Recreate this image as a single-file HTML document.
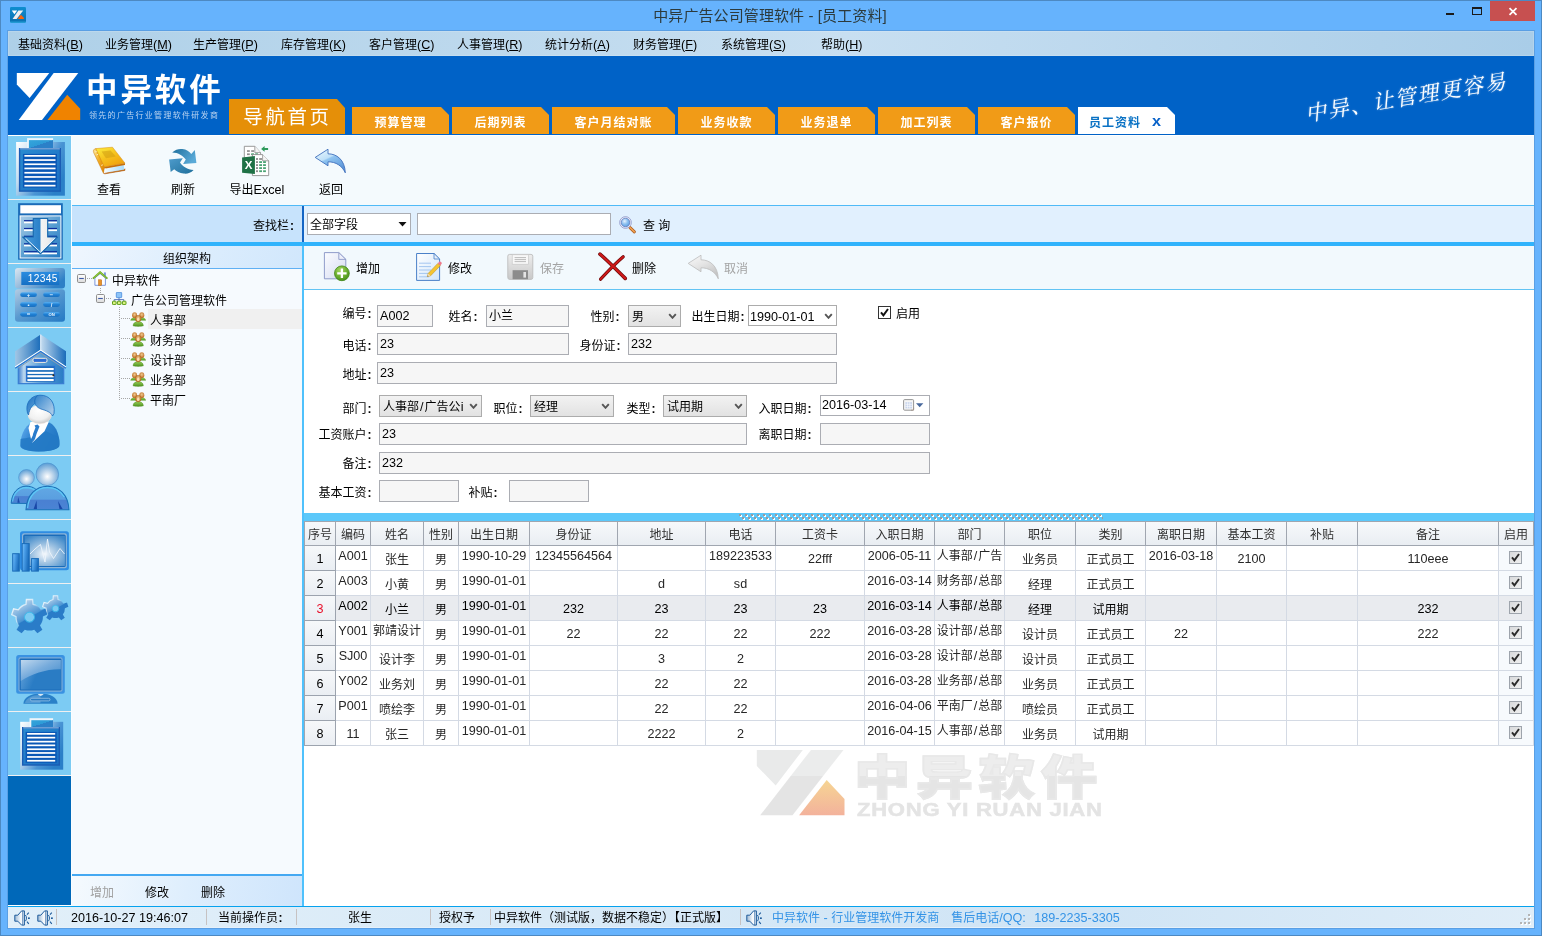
<!DOCTYPE html>
<html lang="zh-CN"><head><meta charset="utf-8"><title>中异广告公司管理软件 - [员工资料]</title>
<style>
html,body{margin:0;padding:0}
body{width:1542px;height:936px;overflow:hidden;position:relative;background:#66b3fd;font:12px/1 "Liberation Sans","Noto Sans CJK SC",sans-serif;color:#000;-webkit-font-smoothing:antialiased}
div,span,svg{box-sizing:border-box}
#win{position:absolute;left:0;top:0;width:1542px;height:936px;overflow:hidden;will-change:transform}
.a{position:absolute}
.t{position:absolute;white-space:nowrap;line-height:18px;height:16px}
.n{font-size:12.6px}
.sl{display:inline-block;width:5.6px;text-align:center;font-size:12.6px}
u{text-decoration:underline;text-underline-offset:1px}
.tab{position:absolute;top:107px;height:27px;width:97px;background:#f19b17;color:#fff;font-weight:bold;font-size:12px;line-height:32px;letter-spacing:1px;text-align:center;clip-path:polygon(0 0,calc(100% - 8px) 0,100% 8px,100% 100%,0 100%)}
.inp{position:absolute;height:22px;border:1px solid #abadb3;background:#f6f6f6;line-height:21px;padding-left:2px;white-space:nowrap;overflow:hidden}
.sel{position:absolute;height:22px;border:1px solid #acacac;background:linear-gradient(#f2f2f2,#e2e2e2);line-height:22px;padding-left:3px;white-space:nowrap;overflow:hidden}
.lab{position:absolute;white-space:nowrap;line-height:18px;height:16px;text-align:right}
.co{display:inline-block;width:6px;text-align:center;font-weight:bold}
.sep{position:absolute;top:909px;width:1px;height:16px;background:#c6c2c2}
.hd{position:absolute;top:522px;height:24px;border-right:1px solid #a0a6b0;border-bottom:1px solid #a0a6b0;background:linear-gradient(#f7f9fb,#e9edf2);text-align:center;line-height:27px;white-space:nowrap;overflow:hidden;color:#303030}
.c{position:absolute;height:25px;border-right:1px solid #d4dae4;border-bottom:1px solid #d4dae4;white-space:nowrap;overflow:hidden;color:#262626}
.cc{text-align:center;line-height:28px}
.cl{line-height:26px}
.ct{text-align:center;line-height:16px;padding-top:2px}
.rn{position:absolute;left:305px;width:31px;height:25px;border-right:1px solid #9ca3ae;border-bottom:1px solid #9ca3ae;background:linear-gradient(#f6f8fa,#eaeef3);text-align:center;line-height:26px;color:#000}
.ti{position:absolute;height:20px;line-height:22px;white-space:nowrap}
</style></head>
<body>
<div id="win">
<svg width="0" height="0" style="position:absolute"><defs>
<linearGradient id="bkTop" x1="0.2" y1="0" x2="0.9" y2="1"><stop offset="0" stop-color="#fbe638"/><stop offset="0.45" stop-color="#f6c01c"/><stop offset="1" stop-color="#ee9a0c"/></linearGradient>
<linearGradient id="bkSp" x1="0" y1="0" x2="1" y2="0.4"><stop offset="0" stop-color="#fce9a0"/><stop offset="0.5" stop-color="#f4b428"/><stop offset="1" stop-color="#e28a0a"/></linearGradient>
<linearGradient id="bkPg" x1="0" y1="0" x2="1" y2="0"><stop offset="0" stop-color="#f4fbff"/><stop offset="1" stop-color="#a8dcfc"/></linearGradient>
<linearGradient id="rfA" x1="0" y1="0" x2="1" y2="0.5"><stop offset="0" stop-color="#1f6f9c"/><stop offset="1" stop-color="#5aaad8"/></linearGradient>
<linearGradient id="rfB" x1="0" y1="0" x2="1" y2="1"><stop offset="0" stop-color="#4e9ccc"/><stop offset="1" stop-color="#1f6f9c"/></linearGradient>
<linearGradient id="bkA" x1="0" y1="0" x2="0.6" y2="1"><stop offset="0" stop-color="#eefaff"/><stop offset="0.45" stop-color="#bfe0f8"/><stop offset="0.5" stop-color="#8fc4f0"/><stop offset="1" stop-color="#5a94d8"/></linearGradient>
<linearGradient id="cnA" x1="0" y1="0" x2="0.6" y2="1"><stop offset="0" stop-color="#fafafa"/><stop offset="0.5" stop-color="#e4e4e4"/><stop offset="1" stop-color="#c4c4c4"/></linearGradient>
<linearGradient id="pgA" x1="0" y1="0" x2="1" y2="1"><stop offset="0" stop-color="#fbfcff"/><stop offset="1" stop-color="#d4dbf0"/></linearGradient>
<radialGradient id="plA" cx="0.4" cy="0.3" r="0.8"><stop offset="0" stop-color="#a4d860"/><stop offset="0.6" stop-color="#66aa2c"/><stop offset="1" stop-color="#3f8a14"/></radialGradient>
<linearGradient id="pgE" x1="0" y1="0" x2="1" y2="1"><stop offset="0" stop-color="#ffffff"/><stop offset="1" stop-color="#cfe4fa"/></linearGradient>
<linearGradient id="svA" x1="0" y1="0" x2="0" y2="1"><stop offset="0" stop-color="#ededed"/><stop offset="1" stop-color="#c8c8c8"/></linearGradient>
<linearGradient id="dlA" x1="0" y1="0" x2="1" y2="1"><stop offset="0" stop-color="#e02020"/><stop offset="0.5" stop-color="#c01010"/><stop offset="1" stop-color="#7a0808"/></linearGradient>
<radialGradient id="mgA" cx="0.4" cy="0.35" r="0.7"><stop offset="0" stop-color="#e8f2fe"/><stop offset="0.5" stop-color="#8cc0f0"/><stop offset="1" stop-color="#5a9ce0"/></radialGradient>
<linearGradient id="exA" x1="0" y1="0" x2="0" y2="1"><stop offset="0" stop-color="#ffffff"/><stop offset="1" stop-color="#dcdcdc"/></linearGradient>
<radialGradient id="grH" cx="0.5" cy="0.4" r="0.6"><stop offset="0" stop-color="#f0c890"/><stop offset="1" stop-color="#b8681c"/></radialGradient>
<linearGradient id="grB" x1="0" y1="0" x2="0" y2="1"><stop offset="0" stop-color="#98cc58"/><stop offset="1" stop-color="#4f9420"/></linearGradient>
<linearGradient id="spA" x1="0" y1="0" x2="1" y2="0"><stop offset="0" stop-color="#9cb8d4"/><stop offset="0.6" stop-color="#f4f8fc"/><stop offset="1" stop-color="#ffffff"/></linearGradient>
</defs></svg>
<div class="a" style="left:0;top:0;width:1542px;height:936px;border:1px solid #4d89c2"></div>
<svg class="a" style="left:10px;top:7px" width="16" height="16" viewBox="0 0 16 16"><defs><linearGradient id="apA" x1="0" y1="0" x2="0" y2="1"><stop offset="0" stop-color="#0f8ed0"/><stop offset="0.85" stop-color="#0a74b4"/><stop offset="1" stop-color="#29a4dc"/></linearGradient></defs><rect width="16" height="16" rx="1.3" fill="url(#apA)"/><path d="M1.8 3.6H7.2L4.4 7.2Z" fill="#fff"/><path d="M8.4 3.6H13.2L6.6 12H2.6Z" fill="#f0f0f0"/><path d="M10.9 7.8L13.9 10.8V12H7.6Z" fill="#f8640c"/></svg>
<div class="t" style="left:0;width:1542px;top:6px;height:20px;line-height:20px;text-align:center;font-size:15px;letter-spacing:0.1px;color:#2c3a3c"><span style="position:relative;left:-1px">中异广告公司管理软件 - [员工资料]</span></div>
<div class="a" style="left:1446px;top:13px;width:8px;height:2px;background:#1a1a1a"></div>
<div class="a" style="left:1472px;top:7px;width:10px;height:8px;border:1px solid #1a1a1a;border-top-width:2px"></div>
<div class="a" style="left:1490px;top:1px;width:45px;height:20px;background:#c75050"></div>
<svg class="a" style="left:1508px;top:7px" width="10" height="9" viewBox="0 0 10 9"><path d="M1.5 1.2 L8.5 7.8 M8.5 1.2 L1.5 7.8" stroke="#fff" stroke-width="1.8" fill="none"/></svg>
<div class="a" style="left:7px;top:30px;width:1528px;height:899px;border:1px solid #5a9fe4"></div>
<div class="a" style="left:8px;top:31px;width:1526px;height:25px;background:linear-gradient(to right,#aed0e8 0%,#c8dff1 55%,#a9cde8 100%);box-shadow:inset 0 0 0 1px rgba(255,255,255,.14)"></div>
<div class="t" style="left:18px;top:36px">基础资料<span class="n">(<u>B</u>)</span></div>
<div class="t" style="left:105px;top:36px">业务管理<span class="n">(<u>M</u>)</span></div>
<div class="t" style="left:193px;top:36px">生产管理<span class="n">(<u>P</u>)</span></div>
<div class="t" style="left:281px;top:36px">库存管理<span class="n">(<u>K</u>)</span></div>
<div class="t" style="left:369px;top:36px">客户管理<span class="n">(<u>C</u>)</span></div>
<div class="t" style="left:457px;top:36px">人事管理<span class="n">(<u>R</u>)</span></div>
<div class="t" style="left:545px;top:36px">统计分析<span class="n">(<u>A</u>)</span></div>
<div class="t" style="left:633px;top:36px">财务管理<span class="n">(<u>F</u>)</span></div>
<div class="t" style="left:721px;top:36px">系统管理<span class="n">(<u>S</u>)</span></div>
<div class="t" style="left:821px;top:36px">帮助<span class="n">(<u>H</u>)</span></div>
<div class="a" style="left:8px;top:56px;width:1526px;height:79px;background:#0062c7"></div>
<svg class="a" style="left:16px;top:72px" width="66" height="50" viewBox="0 0 66 50"><path d="M0.8 0.9H33.3L13.6 25.9L0.8 12.6Z" fill="#fff"/><path d="M37.7 0.9H62.3L26 48H2.7Z" fill="#fff"/><path d="M51.2 22.8L64.2 36.8V48H31.5Z" fill="#f08300"/></svg>
<div class="t" style="left:86px;top:71px;height:38px;line-height:38px;font-size:31.5px;font-weight:bold;color:#fff;letter-spacing:2.9px">中异软件</div>
<div class="t" style="left:89px;top:110px;height:12px;line-height:12px;font-size:8px;color:#b9d3f0;letter-spacing:1.3px">领先的广告行业管理软件研发商</div>
<div class="a" style="left:229px;top:99px;width:116px;height:35px;background:#e58f08;color:#fff;font-size:19.5px;letter-spacing:2.6px;line-height:37px;text-align:center;padding-left:1px;clip-path:polygon(0 0,108px 0,100% 9px,100% 100%,0 100%)">导航首页</div>
<div class="tab" style="left:352px;width:97px">预算管理</div>
<div class="tab" style="left:452px;width:97px">后期列表</div>
<div class="tab" style="left:552px;width:123px">客户月结对账</div>
<div class="tab" style="left:678px;width:97px">业务收款</div>
<div class="tab" style="left:778px;width:97px">业务退单</div>
<div class="tab" style="left:878px;width:97px">加工列表</div>
<div class="tab" style="left:978px;width:97px">客户报价</div>
<div class="tab" style="left:1078px;width:97px;background:#fff;color:#0a72c4;text-align:left;padding-left:11px">员工资料<span style="position:absolute;left:73.5px;top:-2px;font-size:14.5px;letter-spacing:0;color:#0a63c9;transform:scaleX(1.12);transform-origin:0 50%">x</span></div>
<div class="a" style="left:1295px;top:76px;width:220px;height:40px;color:#fff;font:italic 21px/40px 'Noto Serif CJK SC','Liberation Serif',serif;white-space:nowrap;transform:rotate(-9.5deg);transform-origin:50% 50%;text-align:center;letter-spacing:1.7px;text-indent:1.7px;text-shadow:0 0 2px rgba(255,255,255,.55)">中异、让管理更容易</div>
<div class="a" style="left:8px;top:135px;width:1526px;height:771px;background:#f4fafd"></div>
<div class="a" style="left:72px;top:135px;width:1462px;height:1px;background:#fff"></div>
<div class="a" style="left:8px;top:135px;width:63px;height:641px;background:#7ccbf3"></div>
<div class="a" style="left:8px;top:776px;width:63px;height:129px;background:#0068b9"></div>
<div class="a" style="left:71px;top:135px;width:1px;height:771px;background:#fafdff"></div>
<div class="a" style="left:8px;top:135px;width:63px;height:1px;background:#fff"></div>
<div class="a" style="left:8px;top:199px;width:63px;height:1px;background:#f0f0f0"></div>
<div class="a" style="left:8px;top:263px;width:63px;height:1px;background:#f0f0f0"></div>
<div class="a" style="left:8px;top:327px;width:63px;height:1px;background:#f0f0f0"></div>
<div class="a" style="left:8px;top:391px;width:63px;height:1px;background:#f0f0f0"></div>
<div class="a" style="left:8px;top:455px;width:63px;height:1px;background:#f0f0f0"></div>
<div class="a" style="left:8px;top:519px;width:63px;height:1px;background:#f0f0f0"></div>
<div class="a" style="left:8px;top:583px;width:63px;height:1px;background:#f0f0f0"></div>
<div class="a" style="left:8px;top:647px;width:63px;height:1px;background:#f0f0f0"></div>
<div class="a" style="left:8px;top:711px;width:63px;height:1px;background:#f0f0f0"></div>
<div class="a" style="left:8px;top:775px;width:63px;height:1px;background:#f0f0f0"></div>
<svg width="0" height="0" style="position:absolute"><defs>
<linearGradient id="gBoard" x1="0" y1="0" x2="1" y2="0.6"><stop offset="0" stop-color="#ffffff"/><stop offset="0.35" stop-color="#c4dcf0"/><stop offset="0.7" stop-color="#4a94d4"/><stop offset="1" stop-color="#2a7fc8"/></linearGradient>
<linearGradient id="gPaper" x1="0" y1="0" x2="1" y2="1"><stop offset="0" stop-color="#2a8bd0"/><stop offset="1" stop-color="#1a6ec2"/></linearGradient>
<linearGradient id="gClip" x1="0" y1="0" x2="1" y2="1"><stop offset="0" stop-color="#35a6dc"/><stop offset="0.5" stop-color="#2d9ad6"/><stop offset="0.5" stop-color="#2b80c8"/><stop offset="1" stop-color="#2b80c8"/></linearGradient>
<linearGradient id="gDl" x1="0" y1="0" x2="1" y2="1"><stop offset="0" stop-color="#a8cce6"/><stop offset="0.5" stop-color="#5a9fd2"/><stop offset="1" stop-color="#2279c2"/></linearGradient>
<linearGradient id="gArrow" x1="0" y1="0" x2="1" y2="0"><stop offset="0" stop-color="#4a9ee0"/><stop offset="0.5" stop-color="#2a80c8"/><stop offset="0.52" stop-color="#f4f4f4"/><stop offset="0.75" stop-color="#ececec"/><stop offset="1" stop-color="#8cc4f0"/></linearGradient>
<linearGradient id="gCalcT" x1="0" y1="0" x2="1" y2="0.5"><stop offset="0" stop-color="#dde7f0"/><stop offset="0.5" stop-color="#8ab4d8"/><stop offset="1" stop-color="#2e7fc6"/></linearGradient>
<linearGradient id="gCalcB" x1="0" y1="0" x2="1" y2="1"><stop offset="0" stop-color="#b4cce2"/><stop offset="0.45" stop-color="#5a9ad0"/><stop offset="1" stop-color="#2479c4"/></linearGradient>
<linearGradient id="gDisp" x1="0" y1="0" x2="0" y2="1"><stop offset="0" stop-color="#2a8ce0"/><stop offset="1" stop-color="#1670c4"/></linearGradient>
<linearGradient id="gKey" x1="0" y1="0" x2="0" y2="1"><stop offset="0" stop-color="#58aef0"/><stop offset="0.5" stop-color="#1f80d4"/><stop offset="1" stop-color="#1a70c0"/></linearGradient>
<linearGradient id="gRoofL" x1="0" y1="0" x2="1" y2="0"><stop offset="0" stop-color="#a2c6e4"/><stop offset="1" stop-color="#1a6cba"/></linearGradient>
<linearGradient id="gRoofR" x1="0" y1="0" x2="1" y2="0"><stop offset="0" stop-color="#c4dcf0"/><stop offset="1" stop-color="#1a6cba"/></linearGradient>
<linearGradient id="gWall" x1="0" y1="0" x2="1" y2="0"><stop offset="0" stop-color="#3c7ed2"/><stop offset="0.12" stop-color="#b8d6ee"/><stop offset="0.5" stop-color="#5a9fd6"/><stop offset="1" stop-color="#2a7cc6"/></linearGradient>
<radialGradient id="gFace" cx="0.45" cy="0.3" r="0.8"><stop offset="0" stop-color="#ffffff"/><stop offset="0.6" stop-color="#f0f0f0"/><stop offset="1" stop-color="#b8b8b8"/></radialGradient>
<linearGradient id="gHair" x1="0" y1="0" x2="1" y2="0.6"><stop offset="0" stop-color="#1a70c0"/><stop offset="0.4" stop-color="#4a92d2"/><stop offset="1" stop-color="#a4c8e8"/></linearGradient>
<linearGradient id="gSuit" x1="0" y1="0" x2="1" y2="0.4"><stop offset="0" stop-color="#6ab4f4"/><stop offset="0.35" stop-color="#3a8cd6"/><stop offset="1" stop-color="#2278c4"/></linearGradient>
<radialGradient id="gHead" cx="0.5" cy="0.6" r="0.6"><stop offset="0" stop-color="#ffffff"/><stop offset="0.35" stop-color="#c8dcee"/><stop offset="1" stop-color="#5a9cd4"/></radialGradient>
<linearGradient id="gBody" x1="0" y1="0" x2="0" y2="1"><stop offset="0" stop-color="#62a8e4"/><stop offset="0.55" stop-color="#5a9fe0"/><stop offset="0.6" stop-color="#4a80d2"/><stop offset="1" stop-color="#4a84d4"/></linearGradient>
<radialGradient id="gScreen" cx="0.5" cy="0.6" r="0.7"><stop offset="0" stop-color="#f4f8fc"/><stop offset="0.4" stop-color="#a8c8e4"/><stop offset="1" stop-color="#3a86c8"/></radialGradient>
<linearGradient id="gBar" x1="0" y1="0" x2="1" y2="0.3"><stop offset="0" stop-color="#7cc4fc"/><stop offset="0.4" stop-color="#4a9ee8"/><stop offset="1" stop-color="#1a6cbc"/></linearGradient>
<linearGradient id="gGear" x1="0.1" y1="0" x2="0.7" y2="1"><stop offset="0" stop-color="#dce8f4"/><stop offset="0.3" stop-color="#8cbae2"/><stop offset="0.55" stop-color="#4a94d4"/><stop offset="0.58" stop-color="#2a7cc8"/><stop offset="1" stop-color="#2a7cc8"/></linearGradient>
<linearGradient id="gGearHL" x1="0" y1="0" x2="1" y2="1"><stop offset="0" stop-color="#fff" stop-opacity="0.95"/><stop offset="0.4" stop-color="#fff" stop-opacity="0.5"/><stop offset="0.55" stop-color="#2a7cc8" stop-opacity="0"/><stop offset="1" stop-color="#2a7cc8" stop-opacity="0"/></linearGradient>
<linearGradient id="gMon" x1="0" y1="0" x2="1" y2="1"><stop offset="0" stop-color="#c0d8ee"/><stop offset="0.45" stop-color="#78acdc"/><stop offset="1" stop-color="#3a88cc"/></linearGradient>
<linearGradient id="gMon2" x1="0" y1="0" x2="1" y2="0.3"><stop offset="0" stop-color="#6aa6dc"/><stop offset="0.5" stop-color="#2a7cc4"/><stop offset="1" stop-color="#2a7cc4"/></linearGradient>
</defs></svg><svg class="a" style="left:8px;top:135px" width="64" height="64" viewBox="0 0 64 64"><rect x="8.1" y="7.0" width="48.8" height="53.7" fill="url(#gBoard)"/><rect x="19.1" y="3.1" width="26.0" height="10.9" fill="#eef5fb"/><rect x="20.9" y="5.1" width="24.2" height="8.2" fill="url(#gClip)"/><rect x="10.9" y="13.0" width="42.1" height="43.8" fill="#1a5cb4"/><rect x="12.3" y="14.4" width="39.3" height="41.0" fill="url(#gPaper)"/><rect x="12.1" y="13.2" width="39.7" height="1.2" fill="#9cc2e6" opacity="0.8"/><rect x="14.9" y="18.9" width="34.1" height="33.7" fill="#0a58b6"/><rect x="16.4" y="20.0" width="31.1" height="1.7" fill="#fff"/><rect x="16.4" y="24.2" width="31.1" height="1.7" fill="#fff"/><rect x="16.4" y="28.4" width="31.1" height="1.7" fill="#fff"/><rect x="16.4" y="32.6" width="31.1" height="1.7" fill="#fff"/><rect x="16.4" y="36.9" width="31.1" height="1.7" fill="#fff"/><rect x="16.4" y="41.1" width="31.1" height="1.7" fill="#fff"/><rect x="16.4" y="45.5" width="31.1" height="1.7" fill="#fff"/><rect x="16.4" y="49.8" width="31.1" height="1.7" fill="#fff"/></svg><svg class="a" style="left:8px;top:199px" width="64" height="64" viewBox="0 0 64 64"><rect x="10.1" y="4.2" width="44.7" height="56.5" fill="#1b6cb8"/><rect x="12.3" y="6.2" width="40.7" height="8.2" fill="#fff"/><rect x="11.6" y="16.4" width="41.8" height="43.1" fill="#fff"/><rect x="12.6" y="17.4" width="39.8" height="41.1" fill="url(#gDl)"/><rect x="16" y="21.1" width="33" height="1.3" fill="#0c2c9c"/><rect x="16" y="22.6" width="33" height="1.7" fill="#fff"/><rect x="16" y="28.9" width="33" height="1.3" fill="#0c2c9c"/><rect x="16" y="30.4" width="33" height="1.7" fill="#fff"/><rect x="16" y="36.7" width="33" height="1.3" fill="#0c2c9c"/><rect x="16" y="38.2" width="33" height="1.7" fill="#fff"/><rect x="16" y="44.2" width="33" height="1.3" fill="#0c2c9c"/><rect x="16" y="45.7" width="33" height="1.7" fill="#fff"/><rect x="16" y="52.1" width="33" height="1.3" fill="#0c2c9c"/><rect x="16" y="53.6" width="33" height="1.7" fill="#fff"/><path d="M25.3 19.5H39.7V38H49.6L32.5 54.7L14.7 38H25.3Z" fill="url(#gArrow)" stroke="#1b6cb0" stroke-width="1.2" stroke-linejoin="round"/><path d="M17.5 39.2L32.5 53.2L46.8 39.2" fill="none" stroke="#e8f4fe" stroke-width="1"/></svg><svg class="a" style="left:8px;top:263px" width="64" height="64" viewBox="0 0 64 64"><rect x="7" y="4.9" width="50" height="20.7" rx="3" fill="url(#gCalcT)"/><rect x="13.3" y="8.9" width="38" height="13.1" fill="url(#gDisp)"/><text x="49.8" y="19.4" text-anchor="end" font-family="'Liberation Sans',sans-serif" font-size="10.2" fill="#fff" letter-spacing="0.35">12345</text><rect x="7" y="26.3" width="50" height="32.5" rx="3" fill="url(#gCalcB)"/><rect x="12.2" y="29.3" width="16.7" height="4.8" rx="2.4" fill="url(#gKey)"/><text x="20.5" y="33.7" text-anchor="middle" font-family="'Liberation Sans',sans-serif" font-weight="bold" font-size="6" fill="#eaf4fd">+</text><rect x="35.2" y="29.3" width="16.7" height="4.8" rx="2.4" fill="url(#gKey)"/><text x="43.6" y="33.7" text-anchor="middle" font-family="'Liberation Sans',sans-serif" font-weight="bold" font-size="6" fill="#eaf4fd">−</text><rect x="12.2" y="39.1" width="16.7" height="4.8" rx="2.4" fill="url(#gKey)"/><text x="20.5" y="43.5" text-anchor="middle" font-family="'Liberation Sans',sans-serif" font-weight="bold" font-size="6" fill="#eaf4fd">•</text><rect x="35.2" y="39.1" width="16.7" height="4.8" rx="2.4" fill="url(#gKey)"/><text x="43.6" y="43.5" text-anchor="middle" font-family="'Liberation Sans',sans-serif" font-weight="bold" font-size="6" fill="#eaf4fd">/</text><rect x="12.2" y="48.9" width="16.7" height="4.8" rx="2.4" fill="url(#gKey)"/><text x="20.5" y="53.3" text-anchor="middle" font-family="'Liberation Sans',sans-serif" font-weight="bold" font-size="6" fill="#eaf4fd">=</text><rect x="35.2" y="48.9" width="16.7" height="4.8" rx="2.4" fill="url(#gKey)"/><text x="43.6" y="52.8" text-anchor="middle" font-family="'Liberation Sans',sans-serif" font-weight="bold" font-size="4.2" fill="#eaf4fd">ON</text></svg><svg class="a" style="left:8px;top:327px" width="64" height="64" viewBox="0 0 64 64"><path d="M10.3 40.5L32.7 25L55.7 40.5V56.6H10.3Z" fill="url(#gWall)"/><path d="M10.3 40.5V56.6H55.7V40.5" fill="none" stroke="#3a7ed2" stroke-width="1.2"/><path d="M32.7 7.4L7.2 24.3V39.7L32.7 22.9Z" fill="url(#gRoofL)"/><path d="M32.7 7.4L58 24.3V39.7L32.7 22.9Z" fill="url(#gRoofR)"/><path d="M32.7 7.4V22.9" stroke="#eaf3fb" stroke-width="1"/><path d="M7.2 40L32.7 23.2L58 40" fill="none" stroke="#fff" stroke-width="1.1"/><path d="M7.2 41.2L32.7 24.4L58 41.2" fill="none" stroke="#2a74d0" stroke-width="1.2"/><path d="M10.3 41L32.7 26L55.7 41" fill="none" stroke="#8a9cb0" stroke-width="1"/><rect x="25" y="31.3" width="14" height="4.1" rx="1.5" fill="#2a6cd4" stroke="#f2ece0" stroke-width="1"/><rect x="17.9" y="38.8" width="29.3" height="15.9" fill="#2a6ed0"/><rect x="19" y="39.8" width="27.1" height="14.9" fill="#1a6cba"/><rect x="19.4" y="41.0" width="26.3" height="2.1" fill="#fff"/><rect x="19.4" y="44.8" width="26.3" height="2.1" fill="#fff"/><rect x="19.4" y="48.2" width="26.3" height="2.1" fill="#fff"/><rect x="19.4" y="52.0" width="26.3" height="2.1" fill="#fff"/><circle cx="45.4" cy="48.3" r="1" fill="#3a2a10"/></svg><svg class="a" style="left:8px;top:391px" width="64" height="64" viewBox="0 0 64 64"><path d="M12.3 55C12.3 42 19 31.5 27 30.5H38C47 32 51.6 42 51.6 54C51.6 58 43 60.5 32 60.5C21 60.5 12.3 58.5 12.3 55Z" fill="url(#gSuit)"/><path d="M12.6 48C18 47 30 46 38 40L51 47C52 55 51 57 44 59C30 62 14 60 12.5 55Z" fill="#2379c4" opacity="0.85"/><path d="M22.5 31L20.5 37L23 48L30 35L24 52L36.5 40.3L41 30.5Z" fill="#fff"/><path d="M26.5 34.5L29.5 33.5L31.5 35.5L28.5 43L27 48L24 52L25 43L27.5 36.5Z" fill="#2a7ccc"/><ellipse cx="31.8" cy="23.4" rx="11.8" ry="9.4" fill="url(#gFace)" stroke="#f4e4dc" stroke-width="0.5"/><path d="M19.5 22C17 13 22 4.5 32 4.2C42 4 47.5 12 46 22.5L44.5 25C43 21 38 19.5 33 18C29 16.5 27.5 14 27 12.5C25 13.5 21.5 17 20.5 24Z" fill="url(#gHair)" stroke="#1a6cbc" stroke-width="0.8"/><path d="M27 12.5C26 9 27.5 6 29.5 4.6" fill="none" stroke="#1a6cbc" stroke-width="0.9"/></svg><svg class="a" style="left:8px;top:455px" width="64" height="64" viewBox="0 0 64 64"><circle cx="18.5" cy="22.4" r="7.9" fill="url(#gHead)" stroke="#4a94d0" stroke-width="0.6"/><path d="M3.2 48.3C3.6 38 10 31.2 18 31.2C24 31.2 27.5 33.5 29.5 36L24 48.5Z" fill="url(#gBody)" stroke="#1a72b8" stroke-width="1"/><path d="M4.6 46.5C5.4 38.5 11 32.8 18 32.6C22 32.6 25.5 34 27.4 35.6" fill="none" stroke="#5cccf8" stroke-width="1.1"/><path d="M10.2 42L9.4 47.8H11.8Z" fill="#1a4cac"/><circle cx="39.3" cy="19.3" r="11.3" fill="url(#gHead)" stroke="#4a94d0" stroke-width="0.7"/><path d="M18 54.7C18.6 40 28 31.2 39.5 31.2C51 31.2 60.4 40 60.9 54.7Z" fill="url(#gBody)" stroke="#1a72b8" stroke-width="1.1"/><path d="M19.6 53C20.6 40.5 29 32.7 39.5 32.7C47 32.7 53 36.5 56.3 42" fill="none" stroke="#5cccf8" stroke-width="1.2"/><path d="M28.6 45.5L25.6 54H29Z" fill="#1a48a8"/><path d="M50 46L51.5 54H54.6Z" fill="#1a48a8"/></svg><svg class="a" style="left:8px;top:519px" width="64" height="64" viewBox="0 0 64 64"><rect x="12" y="12.2" width="48.9" height="39.1" rx="2.5" fill="#2e8ce2"/><rect x="14" y="14.2" width="44.9" height="35.1" rx="2" fill="#8cb4d8"/><rect x="15.2" y="15.4" width="42.5" height="32.7" rx="1.5" fill="#1a6cba"/><rect x="16.6" y="17" width="40.3" height="30" fill="url(#gScreen)"/><path d="M22 35L27 30L32.5 25.5L37 43L39.5 20L41.5 33L45.5 39.5L52 29.5L56.5 35" fill="none" stroke="#f0f6fb" stroke-width="1" opacity="0.85"/><rect x="4.7" y="34.7" width="6.6" height="17.4" fill="url(#gBar)" stroke="#1a6cb8" stroke-width="1"/><rect x="14.2" y="24.6" width="7.0" height="27.5" fill="url(#gBar)" stroke="#1a6cb8" stroke-width="1"/><rect x="23.6" y="39.6" width="6.8" height="12.5" fill="url(#gBar)" stroke="#1a6cb8" stroke-width="1"/></svg><svg class="a" style="left:8px;top:583px" width="64" height="64" viewBox="0 0 64 64"><path d="M45.0 16.5L45.3 12.8 L49.7 12.8 L50.0 16.5A9.4 9.4 0 0 1 55.4 20.4L59.0 19.5 L60.4 23.7 L56.9 25.2A9.4 9.4 0 0 1 54.8 31.5L56.8 34.7 L53.2 37.3 L50.8 34.4A9.4 9.4 0 0 1 44.2 34.4L41.8 37.3 L38.2 34.7 L40.2 31.5A9.4 9.4 0 0 1 38.1 25.2L34.6 23.7 L36.0 19.5 L39.6 20.4A9.4 9.4 0 0 1 45.0 16.5 Z M50.5 25.6A3 3 0 1 0 44.5 25.6A3 3 0 1 0 50.5 25.6Z" fill="url(#gGear)" fill-rule="evenodd"/><path d="M45.0 16.5L45.3 12.8 L49.7 12.8 L50.0 16.5A9.4 9.4 0 0 1 55.4 20.4L59.0 19.5 L60.4 23.7 L56.9 25.2A9.4 9.4 0 0 1 54.8 31.5L56.8 34.7 L53.2 37.3 L50.8 34.4A9.4 9.4 0 0 1 44.2 34.4L41.8 37.3 L38.2 34.7 L40.2 31.5A9.4 9.4 0 0 1 38.1 25.2L34.6 23.7 L36.0 19.5 L39.6 20.4A9.4 9.4 0 0 1 45.0 16.5 Z" fill="none" stroke="url(#gGearHL)" stroke-width="1.1"/><circle cx="47.5" cy="25.6" r="3.3" fill="none" stroke="#3cc0ee" stroke-width="0.8"/><path d="M18.0 21.3L18.4 16.5 L24.6 16.5 L25.0 21.3A13.4 13.4 0 0 1 32.7 26.8L37.4 25.8 L39.3 31.6 L34.9 33.6A13.4 13.4 0 0 1 32.0 42.6L34.4 46.8 L29.4 50.3 L26.2 46.7A13.4 13.4 0 0 1 16.8 46.7L13.6 50.3 L8.6 46.8 L11.0 42.6A13.4 13.4 0 0 1 8.1 33.6L3.7 31.6 L5.6 25.8 L10.3 26.8A13.4 13.4 0 0 1 18.0 21.3 Z M26.2 34.2A4.7 4.7 0 1 0 16.8 34.2A4.7 4.7 0 1 0 26.2 34.2Z" fill="url(#gGear)" fill-rule="evenodd"/><path d="M18.0 21.3L18.4 16.5 L24.6 16.5 L25.0 21.3A13.4 13.4 0 0 1 32.7 26.8L37.4 25.8 L39.3 31.6 L34.9 33.6A13.4 13.4 0 0 1 32.0 42.6L34.4 46.8 L29.4 50.3 L26.2 46.7A13.4 13.4 0 0 1 16.8 46.7L13.6 50.3 L8.6 46.8 L11.0 42.6A13.4 13.4 0 0 1 8.1 33.6L3.7 31.6 L5.6 25.8 L10.3 26.8A13.4 13.4 0 0 1 18.0 21.3 Z" fill="none" stroke="url(#gGearHL)" stroke-width="1.3"/><circle cx="21.5" cy="34.2" r="5" fill="none" stroke="#3cc0ee" stroke-width="0.9"/></svg><svg class="a" style="left:8px;top:647px" width="64" height="64" viewBox="0 0 64 64"><path d="M15.4 56.8C15.4 51 22 46.5 32.5 46.5C43 46.5 49.6 51 49.6 56.8Z" fill="#2a80c8"/><path d="M17 56C18 51.5 24 48 32.5 48L32.5 56Z" fill="#6aa8dc" opacity="0.6"/><rect x="22.5" y="51.3" width="19.5" height="2.6" rx="1.3" fill="#2a7cc4" stroke="#a8cce8" stroke-width="0.7"/><path d="M29.5 46.8Q32.5 51 36 46.8Z" fill="#d8e8f4"/><rect x="8.2" y="8.1" width="48.6" height="38.7" rx="2.5" fill="#3a92e2"/><rect x="10.4" y="10.2" width="44.2" height="34.5" rx="2" fill="#7cacd8"/><rect x="11.6" y="11.4" width="41.8" height="32.1" rx="1.2" fill="#1a6cba"/><rect x="12.8" y="13" width="40" height="29.5" fill="url(#gMon2)"/><path d="M12.8 13H52.8V22.3C38 22 24 27 12.8 34Z" fill="url(#gMon)"/></svg><svg class="a" style="left:8px;top:711px" width="64" height="64" viewBox="0 0 64 64"><rect x="12.2" y="10.8" width="43.0" height="47.9" fill="url(#gBoard)"/><rect x="21.5" y="7.2" width="23.6" height="9.6" fill="#eef5fb"/><rect x="23.3" y="9.2" width="21.8" height="6.9" fill="url(#gClip)"/><rect x="14.0" y="16.0" width="38.0" height="38.7" fill="#1a5cb4"/><rect x="15.4" y="17.4" width="35.2" height="35.9" fill="url(#gPaper)"/><rect x="15.2" y="16.2" width="35.6" height="1.2" fill="#9cc2e6" opacity="0.8"/><rect x="17.6" y="20.9" width="31.1" height="30.9" fill="#0a58b6"/><rect x="19.1" y="22.0" width="28.1" height="1.7" fill="#fff"/><rect x="19.1" y="25.8" width="28.1" height="1.7" fill="#fff"/><rect x="19.1" y="29.8" width="28.1" height="1.7" fill="#fff"/><rect x="19.1" y="33.5" width="28.1" height="1.7" fill="#fff"/><rect x="19.1" y="37.4" width="28.1" height="1.7" fill="#fff"/><rect x="19.1" y="41.1" width="28.1" height="1.7" fill="#fff"/><rect x="19.1" y="45.1" width="28.1" height="1.7" fill="#fff"/><rect x="19.1" y="48.9" width="28.1" height="1.7" fill="#fff"/></svg>
<svg class="a" style="left:88px;top:140px" width="40" height="40" viewBox="0 0 40 40"><path d="M7.8 8.6C5.6 9 4.8 10.6 5.6 12.4L15.4 33.2L17 27.2Z" fill="url(#bkSp)" stroke="#c8780c" stroke-width="0.5"/><path d="M7 12L9.4 11M8.4 15L10.8 14M13.2 25.4L15.4 24.6" stroke="#fdf2c0" stroke-width="0.9"/><path d="M7.8 8.6L24.5 7.2L37 23.2L16.3 26.9Z" fill="url(#bkTop)" stroke="#d88a0c" stroke-width="0.5"/><path d="M13.6 11.6L22.6 10.6L27.8 16.4L18 18.2Z" fill="#cf9c12" opacity="0.55"/><path d="M17.4 27.6L35.6 24.4L36.4 30L17.2 33.2C16 31.4 16.2 29 17.4 27.6Z" fill="url(#bkPg)"/><path d="M16.3 26.9L37 23.2V25L17.6 28.4Z" fill="#c8700c"/><path d="M15.4 33.2C16.4 33.9 17 33.8 18.2 33.6L36.9 30.4V28.8L36.2 30L17.2 33.2" fill="#b8600c" stroke="#b8600c" stroke-width="0.6"/></svg>
<div class="t" style="left:72px;top:181px;width:74px;text-align:center">查看</div>
<svg class="a" style="left:163px;top:140px" width="40" height="40" viewBox="0 0 40 40"><g transform="translate(-75.2,0)"><path d="M84.4 12.6C87.6 9.2 91.4 8.6 94.6 9C98.6 9.4 101.6 11.4 103.5 14L107 10.1L108.6 23L95.3 24.1L98 19.6C95.4 16 90.6 12.6 84.4 12.6Z" fill="url(#rfA)"/><path d="M105.8 30C102.8 33.2 99 34 95.8 33.5C91.8 33 88.6 31.2 86.4 29.2L82.9 31.9L81.3 19.5L95 18.3L92.2 22.6C94.8 26.4 99.6 29.8 105.8 30Z" fill="url(#rfB)"/></g></svg>
<div class="t" style="left:146px;top:181px;width:74px;text-align:center">刷新</div>
<svg class="a" style="left:230px;top:140px" width="44" height="40" viewBox="0 0 44 40"><path d="M14.3 6.3H24.8L30.6 12.6V18H14.3Z" fill="#fff" stroke="#8e8e8e" stroke-width="0.9"/><path d="M24.8 6.3V12.6H30.6" fill="#f4f4f4" stroke="#8e8e8e" stroke-width="0.8"/><rect x="17.0" y="10.2" width="2.8" height="1.7" fill="#8e8e8e"/><rect x="21.2" y="10.2" width="2.8" height="1.7" fill="#8e8e8e"/><rect x="17.0" y="13.4" width="2.8" height="1.7" fill="#8e8e8e"/><rect x="21.2" y="13.4" width="2.8" height="1.7" fill="#3f9a68"/><rect x="25.2" y="13.4" width="2.8" height="1.7" fill="#3f9a68"/><path d="M22.4 14.6H32.6L38.7 20.8V35.6H22.4Z" fill="#fff" stroke="#8e8e8e" stroke-width="0.9"/><path d="M32.6 14.6V20.8H38.7" fill="#f4f4f4" stroke="#8e8e8e" stroke-width="0.8"/><rect x="26" y="18.1" width="2" height="1.8" fill="#8e8e8e"/><rect x="29.2" y="18.1" width="2.8" height="1.8" fill="#8e8e8e"/><rect x="26" y="21.2" width="2" height="1.8" fill="#8e8e8e"/><rect x="29.2" y="21.2" width="2.8" height="1.8" fill="#4aa374"/><rect x="33.1" y="21.2" width="2.8" height="1.8" fill="#4aa374"/><rect x="26" y="24.2" width="2" height="1.8" fill="#8e8e8e"/><rect x="29.2" y="24.2" width="2.8" height="1.8" fill="#4aa374"/><rect x="33.1" y="24.2" width="2.8" height="1.8" fill="#4aa374"/><rect x="26" y="27.2" width="2" height="1.8" fill="#8e8e8e"/><rect x="29.2" y="27.2" width="2.8" height="1.8" fill="#4aa374"/><rect x="33.1" y="27.2" width="2.8" height="1.8" fill="#4aa374"/><rect x="26" y="30.3" width="2" height="1.8" fill="#8e8e8e"/><rect x="29.2" y="30.3" width="2.8" height="1.8" fill="#4aa374"/><rect x="33.1" y="30.3" width="2.8" height="1.8" fill="#4aa374"/><path d="M12.1 17.5L24.9 16V33.9L12.1 32.7Z" fill="#1e7145"/><text x="18.5" y="29.4" text-anchor="middle" font-family="'Liberation Sans',sans-serif" font-weight="bold" font-size="11.5" fill="#fff">X</text><path d="M31.1 8.9L34.6 6V8H38.1V9.9H34.6V11.8Z" fill="#2f9a5c"/></svg>
<div class="t" style="left:220px;top:181px;width:74px;text-align:center">导出<span class="n">Excel</span></div>
<svg class="a" style="left:313.7px;top:148px" width="33" height="26" viewBox="0 0 33 26"><g transform="translate(0.4,0.4)"><path d="M0.8 9L13.6 0.8V5.4C22 5.4 30.4 11 30.9 24.4C27.6 17.4 21.6 13.4 13.6 13.4V17.4Z" fill="url(#bkA)" stroke="#3f6fbc" stroke-width="0.9" stroke-linejoin="round"/></g></svg>
<div class="t" style="left:294px;top:181px;width:74px;text-align:center">返回</div>
<div class="a" style="left:72px;top:205px;width:1462px;height:37px;background:#e1f0fe;border-top:1px solid #4fbaf7"></div>
<div class="a" style="left:72px;top:206px;width:230px;height:36px;background:#c7e3fc"></div>
<div class="a" style="left:302px;top:206px;width:2px;height:36px;background:#1565c4"></div>
<div class="a" style="left:72px;top:242px;width:1462px;height:4px;background:#30b3fc"></div>
<div class="lab" style="left:215px;width:80px;top:217px">查找栏<span class="co">:</span></div>
<div class="a" style="left:307px;top:213px;width:104px;height:22px;border:1px solid #abadb3;background:#fff;line-height:23px;padding-left:2px">全部字段</div>
<svg class="a" style="left:398px;top:222px" width="9" height="5" viewBox="0 0 9 5"><path d="M0.5 0 L8.5 0 L4.5 4.5 Z" fill="#111"/></svg>
<div class="a" style="left:417px;top:213px;width:194px;height:22px;border:1px solid #abadb3;background:#fff"></div>
<svg class="a" style="left:618px;top:216px" width="19" height="18" viewBox="0 0 19 18"><path d="M12 11.6L16.4 15.8" stroke="#a8581c" stroke-width="3" stroke-linecap="round"/><path d="M12 11.6L16.4 15.8" stroke="#f0a050" stroke-width="1.6" stroke-linecap="round"/><circle cx="7.5" cy="6.5" r="5.8" fill="#f4f6fc" stroke="#8c94c8" stroke-width="0.9"/><circle cx="7.5" cy="6.5" r="4.3" fill="url(#mgA)" stroke="#5870b8" stroke-width="0.7"/></svg>
<div class="t" style="left:643px;top:217px;letter-spacing:0">查 询</div>
<div class="a" style="left:72px;top:246px;width:230px;height:660px;background:#f6fafe"></div>
<div class="a" style="left:72px;top:246px;width:230px;height:23px;background:linear-gradient(115deg,#eff6fe 0%,#dcedfd 55%,#d1e7fc 100%);border-bottom:1px solid #5fb0f4;text-align:center;line-height:26px">组织架构</div>
<div class="a" style="left:302px;top:246px;width:2px;height:660px;background:#4fc1fc"></div>
<svg class="a" style="left:0;top:0" width="310" height="410" viewBox="0 0 310 410" shape-rendering="crispEdges"><g fill="#a6a6a6"><rect x="87" y="278" width="1" height="1"/><rect x="89" y="278" width="1" height="1"/><rect x="91" y="278" width="1" height="1"/><rect x="100" y="288" width="1" height="1"/><rect x="100" y="290" width="1" height="1"/><rect x="100" y="292" width="1" height="1"/><rect x="106" y="298" width="1" height="1"/><rect x="108" y="298" width="1" height="1"/><rect x="110" y="298" width="1" height="1"/><rect x="119" y="307" width="1" height="1"/><rect x="119" y="309" width="1" height="1"/><rect x="119" y="311" width="1" height="1"/><rect x="119" y="313" width="1" height="1"/><rect x="119" y="315" width="1" height="1"/><rect x="119" y="317" width="1" height="1"/><rect x="119" y="319" width="1" height="1"/><rect x="119" y="321" width="1" height="1"/><rect x="119" y="323" width="1" height="1"/><rect x="119" y="325" width="1" height="1"/><rect x="119" y="327" width="1" height="1"/><rect x="119" y="329" width="1" height="1"/><rect x="119" y="331" width="1" height="1"/><rect x="119" y="333" width="1" height="1"/><rect x="119" y="335" width="1" height="1"/><rect x="119" y="337" width="1" height="1"/><rect x="119" y="339" width="1" height="1"/><rect x="119" y="341" width="1" height="1"/><rect x="119" y="343" width="1" height="1"/><rect x="119" y="345" width="1" height="1"/><rect x="119" y="347" width="1" height="1"/><rect x="119" y="349" width="1" height="1"/><rect x="119" y="351" width="1" height="1"/><rect x="119" y="353" width="1" height="1"/><rect x="119" y="355" width="1" height="1"/><rect x="119" y="357" width="1" height="1"/><rect x="119" y="359" width="1" height="1"/><rect x="119" y="361" width="1" height="1"/><rect x="119" y="363" width="1" height="1"/><rect x="119" y="365" width="1" height="1"/><rect x="119" y="367" width="1" height="1"/><rect x="119" y="369" width="1" height="1"/><rect x="119" y="371" width="1" height="1"/><rect x="119" y="373" width="1" height="1"/><rect x="119" y="375" width="1" height="1"/><rect x="119" y="377" width="1" height="1"/><rect x="119" y="379" width="1" height="1"/><rect x="119" y="381" width="1" height="1"/><rect x="119" y="383" width="1" height="1"/><rect x="119" y="385" width="1" height="1"/><rect x="119" y="387" width="1" height="1"/><rect x="119" y="389" width="1" height="1"/><rect x="119" y="391" width="1" height="1"/><rect x="119" y="393" width="1" height="1"/><rect x="119" y="395" width="1" height="1"/><rect x="119" y="397" width="1" height="1"/><rect x="119" y="399" width="1" height="1"/><rect x="121" y="318" width="1" height="1"/><rect x="123" y="318" width="1" height="1"/><rect x="125" y="318" width="1" height="1"/><rect x="127" y="318" width="1" height="1"/><rect x="129" y="318" width="1" height="1"/><rect x="121" y="338" width="1" height="1"/><rect x="123" y="338" width="1" height="1"/><rect x="125" y="338" width="1" height="1"/><rect x="127" y="338" width="1" height="1"/><rect x="129" y="338" width="1" height="1"/><rect x="121" y="358" width="1" height="1"/><rect x="123" y="358" width="1" height="1"/><rect x="125" y="358" width="1" height="1"/><rect x="127" y="358" width="1" height="1"/><rect x="129" y="358" width="1" height="1"/><rect x="121" y="378" width="1" height="1"/><rect x="123" y="378" width="1" height="1"/><rect x="125" y="378" width="1" height="1"/><rect x="127" y="378" width="1" height="1"/><rect x="129" y="378" width="1" height="1"/><rect x="121" y="398" width="1" height="1"/><rect x="123" y="398" width="1" height="1"/><rect x="125" y="398" width="1" height="1"/><rect x="127" y="398" width="1" height="1"/><rect x="129" y="398" width="1" height="1"/></g></svg>
<svg class="a" style="left:77px;top:274px" width="9" height="9" viewBox="0 0 9 9"><rect x="0.5" y="0.5" width="8" height="8" rx="1.2" fill="url(#exA)" stroke="#8f8f8f"/><path d="M2.2 4.5H6.8" stroke="#3f5aa6" stroke-width="1.1"/></svg>
<svg class="a" style="left:96px;top:294px" width="9" height="9" viewBox="0 0 9 9"><rect x="0.5" y="0.5" width="8" height="8" rx="1.2" fill="url(#exA)" stroke="#8f8f8f"/><path d="M2.2 4.5H6.8" stroke="#3f5aa6" stroke-width="1.1"/></svg>
<svg class="a" style="left:92px;top:271px" width="17" height="16" viewBox="0 0 17 16"><rect x="11.9" y="1.4" width="2" height="4.6" fill="#7c98dc"/><path d="M2.9 7V14.3H13.4V7L8.1 2.6Z" fill="#fdfdff" stroke="#6f8cd6" stroke-width="0.9"/><rect x="6.5" y="8.8" width="3.2" height="5.6" fill="#e8922a" stroke="#b8640c" stroke-width="0.5"/><path d="M0.9 7.6L8.1 1.2L15.4 7.6" fill="none" stroke="#6aa81c" stroke-width="1.9" stroke-linejoin="miter"/><path d="M1.6 7L8.1 1.3L14.6 7" fill="none" stroke="#b4e058" stroke-width="0.6"/></svg>
<svg class="a" style="left:112px;top:292px" width="15" height="13" viewBox="0 0 15 13"><rect x="4.3" y="0.4" width="5.4" height="5.2" rx="0.6" fill="#8cc4f8" stroke="#4a8cdc" stroke-width="0.8"/><path d="M7 5.8V7.6M2.2 9.4V7.6H11.8V9.4M7 7.6V9.4" fill="none" stroke="#4a6cb8" stroke-width="0.9"/><rect x="0.5" y="9.2" width="3.6" height="3.4" rx="0.7" fill="#d8f080" stroke="#5a9c14" stroke-width="1"/><rect x="5.4" y="9.2" width="3.6" height="3.4" rx="0.7" fill="#d8f080" stroke="#5a9c14" stroke-width="1"/><rect x="10.4" y="9.2" width="3.6" height="3.4" rx="0.7" fill="#d8f080" stroke="#5a9c14" stroke-width="1"/></svg>
<div class="ti" style="left:112px;top:270px">中异软件</div>
<div class="ti" style="left:131px;top:290px">广告公司管理软件</div>
<div class="a" style="left:148px;top:309px;width:154px;height:20px;background:#f0f0f0"></div>
<svg class="a" style="left:130px;top:312px" width="17" height="15" viewBox="0 0 17 15"><path d="M0.4 8.6C0.6 6.6 2.4 5.6 4.2 5.6C6 5.6 7.6 6.6 7.8 8.6Z" fill="url(#grB)"/><path d="M8.4 8.6C8.6 6.6 10.4 5.6 12.2 5.6C14 5.6 15.8 6.6 16 8.6Z" fill="url(#grB)"/><ellipse cx="4.6" cy="3.2" rx="2.5" ry="2.9" fill="url(#grH)"/><ellipse cx="11.8" cy="3.2" rx="2.5" ry="2.9" fill="url(#grH)"/><path d="M3 13.8C3.2 10.8 5.6 9.6 8.2 9.6C10.8 9.6 13.2 10.8 13.4 13.8C11 14.6 5.4 14.6 3 13.8Z" fill="url(#grB)" stroke="#4a8a1c" stroke-width="0.4"/><ellipse cx="8.2" cy="6.6" rx="2.9" ry="3.3" fill="url(#grH)" stroke="#a85c14" stroke-width="0.4"/><ellipse cx="8.2" cy="7.4" rx="1.3" ry="1.6" fill="#f8dcb0"/></svg>
<div class="ti" style="left:150px;top:310px">人事部</div>
<svg class="a" style="left:130px;top:332px" width="17" height="15" viewBox="0 0 17 15"><path d="M0.4 8.6C0.6 6.6 2.4 5.6 4.2 5.6C6 5.6 7.6 6.6 7.8 8.6Z" fill="url(#grB)"/><path d="M8.4 8.6C8.6 6.6 10.4 5.6 12.2 5.6C14 5.6 15.8 6.6 16 8.6Z" fill="url(#grB)"/><ellipse cx="4.6" cy="3.2" rx="2.5" ry="2.9" fill="url(#grH)"/><ellipse cx="11.8" cy="3.2" rx="2.5" ry="2.9" fill="url(#grH)"/><path d="M3 13.8C3.2 10.8 5.6 9.6 8.2 9.6C10.8 9.6 13.2 10.8 13.4 13.8C11 14.6 5.4 14.6 3 13.8Z" fill="url(#grB)" stroke="#4a8a1c" stroke-width="0.4"/><ellipse cx="8.2" cy="6.6" rx="2.9" ry="3.3" fill="url(#grH)" stroke="#a85c14" stroke-width="0.4"/><ellipse cx="8.2" cy="7.4" rx="1.3" ry="1.6" fill="#f8dcb0"/></svg>
<div class="ti" style="left:150px;top:330px">财务部</div>
<svg class="a" style="left:130px;top:352px" width="17" height="15" viewBox="0 0 17 15"><path d="M0.4 8.6C0.6 6.6 2.4 5.6 4.2 5.6C6 5.6 7.6 6.6 7.8 8.6Z" fill="url(#grB)"/><path d="M8.4 8.6C8.6 6.6 10.4 5.6 12.2 5.6C14 5.6 15.8 6.6 16 8.6Z" fill="url(#grB)"/><ellipse cx="4.6" cy="3.2" rx="2.5" ry="2.9" fill="url(#grH)"/><ellipse cx="11.8" cy="3.2" rx="2.5" ry="2.9" fill="url(#grH)"/><path d="M3 13.8C3.2 10.8 5.6 9.6 8.2 9.6C10.8 9.6 13.2 10.8 13.4 13.8C11 14.6 5.4 14.6 3 13.8Z" fill="url(#grB)" stroke="#4a8a1c" stroke-width="0.4"/><ellipse cx="8.2" cy="6.6" rx="2.9" ry="3.3" fill="url(#grH)" stroke="#a85c14" stroke-width="0.4"/><ellipse cx="8.2" cy="7.4" rx="1.3" ry="1.6" fill="#f8dcb0"/></svg>
<div class="ti" style="left:150px;top:350px">设计部</div>
<svg class="a" style="left:130px;top:372px" width="17" height="15" viewBox="0 0 17 15"><path d="M0.4 8.6C0.6 6.6 2.4 5.6 4.2 5.6C6 5.6 7.6 6.6 7.8 8.6Z" fill="url(#grB)"/><path d="M8.4 8.6C8.6 6.6 10.4 5.6 12.2 5.6C14 5.6 15.8 6.6 16 8.6Z" fill="url(#grB)"/><ellipse cx="4.6" cy="3.2" rx="2.5" ry="2.9" fill="url(#grH)"/><ellipse cx="11.8" cy="3.2" rx="2.5" ry="2.9" fill="url(#grH)"/><path d="M3 13.8C3.2 10.8 5.6 9.6 8.2 9.6C10.8 9.6 13.2 10.8 13.4 13.8C11 14.6 5.4 14.6 3 13.8Z" fill="url(#grB)" stroke="#4a8a1c" stroke-width="0.4"/><ellipse cx="8.2" cy="6.6" rx="2.9" ry="3.3" fill="url(#grH)" stroke="#a85c14" stroke-width="0.4"/><ellipse cx="8.2" cy="7.4" rx="1.3" ry="1.6" fill="#f8dcb0"/></svg>
<div class="ti" style="left:150px;top:370px">业务部</div>
<svg class="a" style="left:130px;top:392px" width="17" height="15" viewBox="0 0 17 15"><path d="M0.4 8.6C0.6 6.6 2.4 5.6 4.2 5.6C6 5.6 7.6 6.6 7.8 8.6Z" fill="url(#grB)"/><path d="M8.4 8.6C8.6 6.6 10.4 5.6 12.2 5.6C14 5.6 15.8 6.6 16 8.6Z" fill="url(#grB)"/><ellipse cx="4.6" cy="3.2" rx="2.5" ry="2.9" fill="url(#grH)"/><ellipse cx="11.8" cy="3.2" rx="2.5" ry="2.9" fill="url(#grH)"/><path d="M3 13.8C3.2 10.8 5.6 9.6 8.2 9.6C10.8 9.6 13.2 10.8 13.4 13.8C11 14.6 5.4 14.6 3 13.8Z" fill="url(#grB)" stroke="#4a8a1c" stroke-width="0.4"/><ellipse cx="8.2" cy="6.6" rx="2.9" ry="3.3" fill="url(#grH)" stroke="#a85c14" stroke-width="0.4"/><ellipse cx="8.2" cy="7.4" rx="1.3" ry="1.6" fill="#f8dcb0"/></svg>
<div class="ti" style="left:150px;top:390px">平南厂</div>
<div class="a" style="left:72px;top:874px;width:230px;height:32px;background:linear-gradient(100deg,#f5fafe 0%,#deeefd 50%,#cfe5fc 100%);border-top:2px solid #44a8f2"></div>
<div class="t" style="left:90px;top:884px;color:#a0a0a0">增加</div>
<div class="t" style="left:145px;top:884px">修改</div>
<div class="t" style="left:201px;top:884px">删除</div>
<div class="a" style="left:304px;top:246px;width:1230px;height:44px;background:#f2f9fd;border-bottom:1px solid #62c4f4"></div>
<div class="a" style="left:304px;top:290px;width:1230px;height:223px;background:#fff"></div>
<div class="a" style="left:304px;top:513px;width:1230px;height:8px;background:#5cc8fa"></div>
<svg class="a" style="left:739px;top:514px" width="364" height="6" viewBox="0 0 364 6" shape-rendering="crispEdges"><defs><pattern id="gripP" width="6" height="6" patternUnits="userSpaceOnUse"><rect x="1" y="1" width="2" height="2" fill="#fff"/><rect x="0" y="0" width="2" height="2" fill="#9c9a9c"/><rect x="4" y="4" width="2" height="2" fill="#fff"/><rect x="3" y="3" width="2" height="2" fill="#9c9a9c"/></pattern></defs><rect width="364" height="6" fill="url(#gripP)"/></svg>
<div class="a" style="left:304px;top:521px;width:1230px;height:385px;background:#fff"></div>
<svg class="a" style="left:323px;top:251px" width="28" height="31" viewBox="0 0 28 31"><path d="M1.4 1.6H15.8L22.8 8.4V27.8H1.4Z" fill="url(#pgA)" stroke="#8592c4" stroke-width="0.9"/><path d="M15.8 1.6V8.4H22.8Z" fill="#eef0fa" stroke="#8592c4" stroke-width="0.8"/><circle cx="18.9" cy="22.3" r="7.4" fill="url(#plA)" stroke="#3d8412" stroke-width="0.8"/><path d="M18.9 17.6V27M14.2 22.3H23.6" stroke="#ffffff" stroke-width="2.3"/></svg>
<div class="t" style="left:356px;top:260px;">增加</div>
<svg class="a" style="left:415px;top:252px" width="28" height="31" viewBox="0 0 28 31"><path d="M1.6 1.5H19L24.6 7V28.4H1.6Z" fill="url(#pgE)" stroke="#4a80c8" stroke-width="1"/><path d="M19 1.5V7H24.6Z" fill="#e4eefa" stroke="#4a80c8" stroke-width="0.8"/><path d="M4 11.2H16" stroke="#a4c6f0" stroke-width="1"/><path d="M4 14.6H16" stroke="#a4c6f0" stroke-width="1"/><path d="M4 18.0H16" stroke="#a4c6f0" stroke-width="1"/><path d="M4 21.4H16" stroke="#a4c6f0" stroke-width="1"/><path d="M4 24.8H14" stroke="#a4c6f0" stroke-width="1"/><path d="M13.2 21.4L22.8 11.4L25.4 13.6L15.6 23.8L12.4 24.6Z" fill="#f4c430" stroke="#b8860c" stroke-width="0.5"/><path d="M22.8 11.4L24.4 9.6C25.2 9 26.8 10.2 26.8 11.4L25.4 13.6Z" fill="#ee7a8c"/><path d="M13.2 21.4L15.6 23.8L12.4 24.6Z" fill="#f0d8b0"/><path d="M12.4 24.6L13.4 24.3L12.8 23.6Z" fill="#444"/></svg>
<div class="t" style="left:448px;top:260px;">修改</div>
<svg class="a" style="left:507px;top:253px" width="27" height="28" viewBox="0 0 27 28"><rect x="0.8" y="1.4" width="25" height="25" rx="1.8" fill="url(#svA)" stroke="#bdbdbd" stroke-width="0.9"/><rect x="5.2" y="1.8" width="16.2" height="9.4" fill="#f8f8f8" stroke="#c4c4c4" stroke-width="0.6"/><path d="M7.6 4.6H19M7.6 6.6H19M7.6 8.6H19" stroke="#b4b4b4" stroke-width="0.9"/><rect x="5.6" y="17.2" width="15.4" height="9" fill="#8c8c8c"/><rect x="16.4" y="19" width="2.6" height="5.6" fill="#e4e4e4"/></svg>
<div class="t" style="left:540px;top:260px;color:#a3a3a3">保存</div>
<svg class="a" style="left:598px;top:252px" width="30" height="30" viewBox="0 0 30 30"><path d="M2 2.2C9 8 18 17.4 27.2 26.4" stroke="#6a0808" stroke-width="3.6" stroke-linecap="round" fill="none"/><path d="M25.2 4.8C18 11 9.6 19.6 2.6 27.2" stroke="#6a0808" stroke-width="3.2" stroke-linecap="round" fill="none"/><path d="M2 2.2C9 8 18 17.4 27.2 26.4" stroke="#d01a1a" stroke-width="2.2" stroke-linecap="round" fill="none"/><path d="M25.2 4.8C18 11 9.6 19.6 2.6 27.2" stroke="#cc1818" stroke-width="1.9" stroke-linecap="round" fill="none"/></svg>
<div class="t" style="left:632px;top:260px;">删除</div>
<svg class="a" style="left:687.4px;top:254.2px" width="33" height="26" viewBox="0 0 33 26"><g transform="translate(0.4,0.4)"><path d="M0.8 9L13.6 0.8V5.4C22 5.4 30.4 11 30.9 24.4C27.6 17.4 21.6 13.4 13.6 13.4V17.4Z" fill="url(#cnA)" stroke="#bcbcbc" stroke-width="0.8" stroke-linejoin="round"/></g></svg>
<div class="t" style="left:724px;top:260px;color:#a3a3a3">取消</div>
<div class="lab" style="left:292.5px;width:80px;top:305px">编号<span class="co">:</span></div>
<div class="inp" style="left:377px;top:305px;width:56px"><span class="n">A002</span></div>
<div class="lab" style="left:398.5px;width:80px;top:308px">姓名<span class="co">:</span></div>
<div class="inp" style="left:486px;top:305px;width:83px">小兰</div>
<div class="lab" style="left:540.5px;width:80px;top:308px">性别<span class="co">:</span></div>
<div class="sel" style="left:628px;top:305px;width:53px;">男</div>
<svg class="a" style="left:668px;top:313px" width="9" height="6" viewBox="0 0 9 6"><path d="M1.2 1.2 L4.5 4.8 L7.8 1.2" stroke="#555" stroke-width="1.9" fill="none"/></svg>
<div class="lab" style="left:665.5px;width:80px;top:308px">出生日期<span class="co">:</span></div>
<div class="sel" style="left:748px;top:305px;width:89px;background:#fff;padding-left:1px;height:21px;"><span class="n">1990-01-01</span></div>
<svg class="a" style="left:824px;top:313px" width="9" height="6" viewBox="0 0 9 6"><path d="M1.2 1.2 L4.5 4.8 L7.8 1.2" stroke="#555" stroke-width="1.9" fill="none"/></svg>
<div class="a" style="left:878px;top:306px;width:13px;height:13px;border:1px solid #333;background:#fff"></div>
<svg class="a" style="left:878px;top:306px" width="13" height="13" viewBox="0 0 13 13"><path d="M3 6.3 L5.4 9.3 L10 3" stroke="#111" stroke-width="2" fill="none"/></svg>
<div class="t" style="left:896px;top:305px">启用</div>
<div class="lab" style="left:292.5px;width:80px;top:337px">电话<span class="co">:</span></div>
<div class="inp" style="left:377px;top:333px;width:192px"><span class="n">23</span></div>
<div class="lab" style="left:541.5px;width:80px;top:337px">身份证<span class="co">:</span></div>
<div class="inp" style="left:628px;top:333px;width:209px"><span class="n">232</span></div>
<div class="lab" style="left:292.5px;width:80px;top:366px">地址<span class="co">:</span></div>
<div class="inp" style="left:377px;top:362px;width:460px"><span class="n">23</span></div>
<div class="lab" style="left:292.5px;width:80px;top:400px">部门<span class="co">:</span></div>
<div class="sel" style="left:379px;top:395px;width:103px;">人事部<span class="sl">/</span>广告公<span class="n">i</span></div>
<svg class="a" style="left:469px;top:403px" width="9" height="6" viewBox="0 0 9 6"><path d="M1.2 1.2 L4.5 4.8 L7.8 1.2" stroke="#555" stroke-width="1.9" fill="none"/></svg>
<div class="lab" style="left:443.5px;width:80px;top:400px">职位<span class="co">:</span></div>
<div class="sel" style="left:530px;top:395px;width:84px;">经理</div>
<svg class="a" style="left:601px;top:403px" width="9" height="6" viewBox="0 0 9 6"><path d="M1.2 1.2 L4.5 4.8 L7.8 1.2" stroke="#555" stroke-width="1.9" fill="none"/></svg>
<div class="lab" style="left:576.5px;width:80px;top:400px">类型<span class="co">:</span></div>
<div class="sel" style="left:663px;top:395px;width:84px;">试用期</div>
<svg class="a" style="left:734px;top:403px" width="9" height="6" viewBox="0 0 9 6"><path d="M1.2 1.2 L4.5 4.8 L7.8 1.2" stroke="#555" stroke-width="1.9" fill="none"/></svg>
<div class="lab" style="left:732.5px;width:80px;top:400px">入职日期<span class="co">:</span></div>
<div class="inp" style="left:820px;top:395px;width:110px;height:21px;background:#fff;border-color:#abadb3;line-height:19px;padding-left:1px"><span class="n">2016-03-14</span></div>
<svg class="a" style="left:903px;top:399px" width="22" height="13" viewBox="0 0 22 13"><rect x="0.6" y="0.6" width="10" height="10.6" rx="1" fill="#f6f6f6" stroke="#8a8a8a" stroke-width="0.9"/><rect x="2.4" y="3.2" width="6.6" height="6.2" fill="#c8d4ec"/><path d="M2.4 5.3H9M2.4 7.4H9M4.6 3.2V9.4M6.8 3.2V9.4" stroke="#fff" stroke-width="0.6"/><path d="M10.6 8.6V11.2H8" fill="none" stroke="#a09088" stroke-width="0.8"/><path d="M13 4.2H20.4L16.7 8.2Z" fill="#48689c"/></svg>
<div class="lab" style="left:292.5px;width:80px;top:426px">工资账户<span class="co">:</span></div>
<div class="inp" style="left:379px;top:423px;width:368px"><span class="n">23</span></div>
<div class="lab" style="left:732.5px;width:80px;top:426px">离职日期<span class="co">:</span></div>
<div class="inp" style="left:820px;top:423px;width:110px"></div>
<div class="lab" style="left:292.5px;width:80px;top:455px">备注<span class="co">:</span></div>
<div class="inp" style="left:379px;top:452px;width:551px"><span class="n">232</span></div>
<div class="lab" style="left:292.5px;width:80px;top:484px">基本工资<span class="co">:</span></div>
<div class="inp" style="left:379px;top:480px;width:80px"></div>
<div class="lab" style="left:418.5px;width:80px;top:484px">补贴<span class="co">:</span></div>
<div class="inp" style="left:509px;top:480px;width:80px"></div>
<div class="a" style="left:304px;top:521px;width:1230px;height:1px;background:#a0a6b0"></div>
<div class="a" style="left:304px;top:521px;width:1px;height:225px;background:#a0a6b0"></div>
<div class="hd" style="left:305px;width:31px">序号</div>
<div class="hd" style="left:336px;width:35px">编码</div>
<div class="hd" style="left:371px;width:53px">姓名</div>
<div class="hd" style="left:424px;width:35px">性别</div>
<div class="hd" style="left:459px;width:71px">出生日期</div>
<div class="hd" style="left:530px;width:88px">身份证</div>
<div class="hd" style="left:618px;width:88px">地址</div>
<div class="hd" style="left:706px;width:70px">电话</div>
<div class="hd" style="left:776px;width:89px">工资卡</div>
<div class="hd" style="left:865px;width:70px">入职日期</div>
<div class="hd" style="left:935px;width:70px">部门</div>
<div class="hd" style="left:1005px;width:71px">职位</div>
<div class="hd" style="left:1076px;width:70px">类别</div>
<div class="hd" style="left:1146px;width:71px">离职日期</div>
<div class="hd" style="left:1217px;width:70px">基本工资</div>
<div class="hd" style="left:1287px;width:71px">补贴</div>
<div class="hd" style="left:1358px;width:141px">备注</div>
<div class="hd" style="left:1499px;width:35px">启用</div>
<div class="rn" style="top:546px;"><span class="n">1</span></div>
<div class="c ct" style="left:336px;top:546px;width:35px;"><span class="n">A001</span></div>
<div class="c cc" style="left:371px;top:546px;width:53px;">张生</div>
<div class="c cc" style="left:424px;top:546px;width:35px;">男</div>
<div class="c ct" style="left:459px;top:546px;width:71px;"><span class="n">1990-10-29</span></div>
<div class="c ct" style="left:530px;top:546px;width:88px;"><span class="n">12345564564</span></div>
<div class="c cc" style="left:618px;top:546px;width:88px;"></div>
<div class="c ct" style="left:706px;top:546px;width:70px;"><span class="n">189223533</span></div>
<div class="c cc cl" style="left:776px;top:546px;width:89px;"><span class="n">22fff</span></div>
<div class="c ct" style="left:865px;top:546px;width:70px;"><span class="n">2006-05-11</span></div>
<div class="c ct" style="left:935px;top:546px;width:70px;">人事部<span class="sl">/</span>广告</div>
<div class="c cc" style="left:1005px;top:546px;width:71px;">业务员</div>
<div class="c cc" style="left:1076px;top:546px;width:70px;">正式员工</div>
<div class="c ct" style="left:1146px;top:546px;width:71px;"><span class="n">2016-03-18</span></div>
<div class="c cc cl" style="left:1217px;top:546px;width:70px;"><span class="n">2100</span></div>
<div class="c cc" style="left:1287px;top:546px;width:71px;"></div>
<div class="c cc cl" style="left:1358px;top:546px;width:141px;"><span class="n">110eee</span></div>
<div class="c" style="left:1499px;top:546px;width:35px;background:#f7fafd;"></div>
<div class="a" style="left:1509px;top:551px;width:13px;height:13px;border:1px solid #9ea4ac;background:linear-gradient(135deg,#d9dadc,#efefef)"></div>
<svg class="a" style="left:1509px;top:551px" width="13" height="13" viewBox="0 0 13 13"><path d="M3 6.3 L5.4 9.4 L10 3" stroke="#2a2a2a" stroke-width="1.9" fill="none"/></svg>
<div class="rn" style="top:571px;"><span class="n">2</span></div>
<div class="c ct" style="left:336px;top:571px;width:35px;"><span class="n">A003</span></div>
<div class="c cc" style="left:371px;top:571px;width:53px;">小黄</div>
<div class="c cc" style="left:424px;top:571px;width:35px;">男</div>
<div class="c ct" style="left:459px;top:571px;width:71px;"><span class="n">1990-01-01</span></div>
<div class="c cc" style="left:530px;top:571px;width:88px;"></div>
<div class="c cc cl" style="left:618px;top:571px;width:88px;"><span class="n">d</span></div>
<div class="c cc cl" style="left:706px;top:571px;width:70px;"><span class="n">sd</span></div>
<div class="c cc" style="left:776px;top:571px;width:89px;"></div>
<div class="c ct" style="left:865px;top:571px;width:70px;"><span class="n">2016-03-14</span></div>
<div class="c ct" style="left:935px;top:571px;width:70px;">财务部<span class="sl">/</span>总部</div>
<div class="c cc" style="left:1005px;top:571px;width:71px;">经理</div>
<div class="c cc" style="left:1076px;top:571px;width:70px;">正式员工</div>
<div class="c cc" style="left:1146px;top:571px;width:71px;"></div>
<div class="c cc" style="left:1217px;top:571px;width:70px;"></div>
<div class="c cc" style="left:1287px;top:571px;width:71px;"></div>
<div class="c cc" style="left:1358px;top:571px;width:141px;"></div>
<div class="c" style="left:1499px;top:571px;width:35px;background:#f7fafd;"></div>
<div class="a" style="left:1509px;top:576px;width:13px;height:13px;border:1px solid #9ea4ac;background:linear-gradient(135deg,#d9dadc,#efefef)"></div>
<svg class="a" style="left:1509px;top:576px" width="13" height="13" viewBox="0 0 13 13"><path d="M3 6.3 L5.4 9.4 L10 3" stroke="#2a2a2a" stroke-width="1.9" fill="none"/></svg>
<div class="rn" style="top:596px;color:#e8102a;"><span class="n">3</span></div>
<div class="c ct" style="left:336px;top:596px;width:35px;background:#e9ebef;color:#000;"><span class="n">A002</span></div>
<div class="c cc" style="left:371px;top:596px;width:53px;background:#e9ebef;color:#000;">小兰</div>
<div class="c cc" style="left:424px;top:596px;width:35px;background:#e9ebef;color:#000;">男</div>
<div class="c ct" style="left:459px;top:596px;width:71px;background:#e9ebef;color:#000;"><span class="n">1990-01-01</span></div>
<div class="c cc cl" style="left:530px;top:596px;width:88px;background:#e9ebef;color:#000;"><span class="n">232</span></div>
<div class="c cc cl" style="left:618px;top:596px;width:88px;background:#e9ebef;color:#000;"><span class="n">23</span></div>
<div class="c cc cl" style="left:706px;top:596px;width:70px;background:#e9ebef;color:#000;"><span class="n">23</span></div>
<div class="c cc cl" style="left:776px;top:596px;width:89px;background:#e9ebef;color:#000;"><span class="n">23</span></div>
<div class="c ct" style="left:865px;top:596px;width:70px;background:#e9ebef;color:#000;"><span class="n">2016-03-14</span></div>
<div class="c ct" style="left:935px;top:596px;width:70px;background:#e9ebef;color:#000;">人事部<span class="sl">/</span>总部</div>
<div class="c cc" style="left:1005px;top:596px;width:71px;background:#e9ebef;color:#000;">经理</div>
<div class="c cc" style="left:1076px;top:596px;width:70px;background:#e9ebef;color:#000;">试用期</div>
<div class="c cc" style="left:1146px;top:596px;width:71px;background:#e9ebef;color:#000;"></div>
<div class="c cc" style="left:1217px;top:596px;width:70px;background:#e9ebef;color:#000;"></div>
<div class="c cc" style="left:1287px;top:596px;width:71px;background:#e9ebef;color:#000;"></div>
<div class="c cc cl" style="left:1358px;top:596px;width:141px;background:#e9ebef;color:#000;"><span class="n">232</span></div>
<div class="c" style="left:1499px;top:596px;width:35px;background:#e9ebef;"></div>
<div class="a" style="left:1509px;top:601px;width:13px;height:13px;border:1px solid #9ea4ac;background:linear-gradient(135deg,#d9dadc,#efefef)"></div>
<svg class="a" style="left:1509px;top:601px" width="13" height="13" viewBox="0 0 13 13"><path d="M3 6.3 L5.4 9.4 L10 3" stroke="#2a2a2a" stroke-width="1.9" fill="none"/></svg>
<div class="rn" style="top:621px;"><span class="n">4</span></div>
<div class="c ct" style="left:336px;top:621px;width:35px;"><span class="n">Y001</span></div>
<div class="c ct" style="left:371px;top:621px;width:53px;">郭靖设计</div>
<div class="c cc" style="left:424px;top:621px;width:35px;">男</div>
<div class="c ct" style="left:459px;top:621px;width:71px;"><span class="n">1990-01-01</span></div>
<div class="c cc cl" style="left:530px;top:621px;width:88px;"><span class="n">22</span></div>
<div class="c cc cl" style="left:618px;top:621px;width:88px;"><span class="n">22</span></div>
<div class="c cc cl" style="left:706px;top:621px;width:70px;"><span class="n">22</span></div>
<div class="c cc cl" style="left:776px;top:621px;width:89px;"><span class="n">222</span></div>
<div class="c ct" style="left:865px;top:621px;width:70px;"><span class="n">2016-03-28</span></div>
<div class="c ct" style="left:935px;top:621px;width:70px;">设计部<span class="sl">/</span>总部</div>
<div class="c cc" style="left:1005px;top:621px;width:71px;">设计员</div>
<div class="c cc" style="left:1076px;top:621px;width:70px;">正式员工</div>
<div class="c cc cl" style="left:1146px;top:621px;width:71px;"><span class="n">22</span></div>
<div class="c cc" style="left:1217px;top:621px;width:70px;"></div>
<div class="c cc" style="left:1287px;top:621px;width:71px;"></div>
<div class="c cc cl" style="left:1358px;top:621px;width:141px;"><span class="n">222</span></div>
<div class="c" style="left:1499px;top:621px;width:35px;background:#f7fafd;"></div>
<div class="a" style="left:1509px;top:626px;width:13px;height:13px;border:1px solid #9ea4ac;background:linear-gradient(135deg,#d9dadc,#efefef)"></div>
<svg class="a" style="left:1509px;top:626px" width="13" height="13" viewBox="0 0 13 13"><path d="M3 6.3 L5.4 9.4 L10 3" stroke="#2a2a2a" stroke-width="1.9" fill="none"/></svg>
<div class="rn" style="top:646px;"><span class="n">5</span></div>
<div class="c ct" style="left:336px;top:646px;width:35px;"><span class="n">SJ00</span></div>
<div class="c cc" style="left:371px;top:646px;width:53px;">设计李</div>
<div class="c cc" style="left:424px;top:646px;width:35px;">男</div>
<div class="c ct" style="left:459px;top:646px;width:71px;"><span class="n">1990-01-01</span></div>
<div class="c cc" style="left:530px;top:646px;width:88px;"></div>
<div class="c cc cl" style="left:618px;top:646px;width:88px;"><span class="n">3</span></div>
<div class="c cc cl" style="left:706px;top:646px;width:70px;"><span class="n">2</span></div>
<div class="c cc" style="left:776px;top:646px;width:89px;"></div>
<div class="c ct" style="left:865px;top:646px;width:70px;"><span class="n">2016-03-28</span></div>
<div class="c ct" style="left:935px;top:646px;width:70px;">设计部<span class="sl">/</span>总部</div>
<div class="c cc" style="left:1005px;top:646px;width:71px;">设计员</div>
<div class="c cc" style="left:1076px;top:646px;width:70px;">正式员工</div>
<div class="c cc" style="left:1146px;top:646px;width:71px;"></div>
<div class="c cc" style="left:1217px;top:646px;width:70px;"></div>
<div class="c cc" style="left:1287px;top:646px;width:71px;"></div>
<div class="c cc" style="left:1358px;top:646px;width:141px;"></div>
<div class="c" style="left:1499px;top:646px;width:35px;background:#f7fafd;"></div>
<div class="a" style="left:1509px;top:651px;width:13px;height:13px;border:1px solid #9ea4ac;background:linear-gradient(135deg,#d9dadc,#efefef)"></div>
<svg class="a" style="left:1509px;top:651px" width="13" height="13" viewBox="0 0 13 13"><path d="M3 6.3 L5.4 9.4 L10 3" stroke="#2a2a2a" stroke-width="1.9" fill="none"/></svg>
<div class="rn" style="top:671px;"><span class="n">6</span></div>
<div class="c ct" style="left:336px;top:671px;width:35px;"><span class="n">Y002</span></div>
<div class="c cc" style="left:371px;top:671px;width:53px;">业务刘</div>
<div class="c cc" style="left:424px;top:671px;width:35px;">男</div>
<div class="c ct" style="left:459px;top:671px;width:71px;"><span class="n">1990-01-01</span></div>
<div class="c cc" style="left:530px;top:671px;width:88px;"></div>
<div class="c cc cl" style="left:618px;top:671px;width:88px;"><span class="n">22</span></div>
<div class="c cc cl" style="left:706px;top:671px;width:70px;"><span class="n">22</span></div>
<div class="c cc" style="left:776px;top:671px;width:89px;"></div>
<div class="c ct" style="left:865px;top:671px;width:70px;"><span class="n">2016-03-28</span></div>
<div class="c ct" style="left:935px;top:671px;width:70px;">业务部<span class="sl">/</span>总部</div>
<div class="c cc" style="left:1005px;top:671px;width:71px;">业务员</div>
<div class="c cc" style="left:1076px;top:671px;width:70px;">正式员工</div>
<div class="c cc" style="left:1146px;top:671px;width:71px;"></div>
<div class="c cc" style="left:1217px;top:671px;width:70px;"></div>
<div class="c cc" style="left:1287px;top:671px;width:71px;"></div>
<div class="c cc" style="left:1358px;top:671px;width:141px;"></div>
<div class="c" style="left:1499px;top:671px;width:35px;background:#f7fafd;"></div>
<div class="a" style="left:1509px;top:676px;width:13px;height:13px;border:1px solid #9ea4ac;background:linear-gradient(135deg,#d9dadc,#efefef)"></div>
<svg class="a" style="left:1509px;top:676px" width="13" height="13" viewBox="0 0 13 13"><path d="M3 6.3 L5.4 9.4 L10 3" stroke="#2a2a2a" stroke-width="1.9" fill="none"/></svg>
<div class="rn" style="top:696px;"><span class="n">7</span></div>
<div class="c ct" style="left:336px;top:696px;width:35px;"><span class="n">P001</span></div>
<div class="c cc" style="left:371px;top:696px;width:53px;">喷绘李</div>
<div class="c cc" style="left:424px;top:696px;width:35px;">男</div>
<div class="c ct" style="left:459px;top:696px;width:71px;"><span class="n">1990-01-01</span></div>
<div class="c cc" style="left:530px;top:696px;width:88px;"></div>
<div class="c cc cl" style="left:618px;top:696px;width:88px;"><span class="n">22</span></div>
<div class="c cc cl" style="left:706px;top:696px;width:70px;"><span class="n">22</span></div>
<div class="c cc" style="left:776px;top:696px;width:89px;"></div>
<div class="c ct" style="left:865px;top:696px;width:70px;"><span class="n">2016-04-06</span></div>
<div class="c ct" style="left:935px;top:696px;width:70px;">平南厂<span class="sl">/</span>总部</div>
<div class="c cc" style="left:1005px;top:696px;width:71px;">喷绘员</div>
<div class="c cc" style="left:1076px;top:696px;width:70px;">正式员工</div>
<div class="c cc" style="left:1146px;top:696px;width:71px;"></div>
<div class="c cc" style="left:1217px;top:696px;width:70px;"></div>
<div class="c cc" style="left:1287px;top:696px;width:71px;"></div>
<div class="c cc" style="left:1358px;top:696px;width:141px;"></div>
<div class="c" style="left:1499px;top:696px;width:35px;background:#f7fafd;"></div>
<div class="a" style="left:1509px;top:701px;width:13px;height:13px;border:1px solid #9ea4ac;background:linear-gradient(135deg,#d9dadc,#efefef)"></div>
<svg class="a" style="left:1509px;top:701px" width="13" height="13" viewBox="0 0 13 13"><path d="M3 6.3 L5.4 9.4 L10 3" stroke="#2a2a2a" stroke-width="1.9" fill="none"/></svg>
<div class="rn" style="top:721px;"><span class="n">8</span></div>
<div class="c cc cl" style="left:336px;top:721px;width:35px;"><span class="n">11</span></div>
<div class="c cc" style="left:371px;top:721px;width:53px;">张三</div>
<div class="c cc" style="left:424px;top:721px;width:35px;">男</div>
<div class="c ct" style="left:459px;top:721px;width:71px;"><span class="n">1990-01-01</span></div>
<div class="c cc" style="left:530px;top:721px;width:88px;"></div>
<div class="c cc cl" style="left:618px;top:721px;width:88px;"><span class="n">2222</span></div>
<div class="c cc cl" style="left:706px;top:721px;width:70px;"><span class="n">2</span></div>
<div class="c cc" style="left:776px;top:721px;width:89px;"></div>
<div class="c ct" style="left:865px;top:721px;width:70px;"><span class="n">2016-04-15</span></div>
<div class="c ct" style="left:935px;top:721px;width:70px;">人事部<span class="sl">/</span>总部</div>
<div class="c cc" style="left:1005px;top:721px;width:71px;">业务员</div>
<div class="c cc" style="left:1076px;top:721px;width:70px;">试用期</div>
<div class="c cc" style="left:1146px;top:721px;width:71px;"></div>
<div class="c cc" style="left:1217px;top:721px;width:70px;"></div>
<div class="c cc" style="left:1287px;top:721px;width:71px;"></div>
<div class="c cc" style="left:1358px;top:721px;width:141px;"></div>
<div class="c" style="left:1499px;top:721px;width:35px;background:#f7fafd;"></div>
<div class="a" style="left:1509px;top:726px;width:13px;height:13px;border:1px solid #9ea4ac;background:linear-gradient(135deg,#d9dadc,#efefef)"></div>
<svg class="a" style="left:1509px;top:726px" width="13" height="13" viewBox="0 0 13 13"><path d="M3 6.3 L5.4 9.4 L10 3" stroke="#2a2a2a" stroke-width="1.9" fill="none"/></svg>
<svg class="a" style="left:755px;top:748px" width="92" height="70" viewBox="0 0 92 70"><defs><linearGradient id="wmg" x1="0" y1="0" x2="0" y2="1"><stop offset="0" stop-color="#f6d593"/><stop offset="1" stop-color="#f3b29c"/></linearGradient><linearGradient id="wmz" x1="0" y1="0" x2="0" y2="1"><stop offset="0" stop-color="#ebecec"/><stop offset="0.4" stop-color="#ebecec"/><stop offset="0.4" stop-color="#e4e4e4"/><stop offset="1" stop-color="#e4e4e4"/></linearGradient></defs><path d="M1.8 1.9H47.8L20.7 37.6L1.8 17.9Z" fill="#e9eaea"/><path d="M56 1.9H88.5L37.5 67.2H5.2Z" fill="url(#wmz)"/><path d="M71.7 31.9L89.5 51.1V67.2H44.1Z" fill="url(#wmg)"/></svg>
<div class="t" style="left:854px;top:752px;height:52px;line-height:52px;font-size:47px;font-weight:900;letter-spacing:4.9px;transform:scaleX(1.2);transform-origin:0 50%;background:linear-gradient(#ededed 0,#ededed 46%,#e5e5e5 46%,#e5e5e5 100%);-webkit-background-clip:text;background-clip:text;color:transparent;-webkit-text-stroke:1.4px #e8e8e8">中异软件</div>
<div class="t" style="left:857px;top:799px;height:22px;line-height:22px;font-size:18px;font-weight:bold;color:#e4e4e4;letter-spacing:0.6px;transform:scaleX(1.225);transform-origin:0 50%;-webkit-text-stroke:0.5px #e4e4e4">ZHONG YI RUAN JIAN</div>
<div class="a" style="left:8px;top:905px;width:63px;height:1px;background:#fff"></div>
<div class="a" style="left:8px;top:906px;width:1526px;height:22px;background:linear-gradient(to right,#e1eff9 0%,#d9eaf7 35%,#cfe4f5 70%,#dfedf8 100%);border-top:1px solid #06a2ee;border-bottom:1px solid #e6f1fa"></div>
<svg class="a" style="left:14px;top:909.5px" width="17" height="16" viewBox="0 0 17 16"><path d="M0.8 5.2H3.8L7.6 0.9H10.4V15.1H7.6L3.8 11.2H0.8Z" fill="url(#spA)" stroke="#1f5c9c" stroke-width="1" stroke-linejoin="round"/><path d="M8.8 1V15" stroke="#1f5c9c" stroke-width="0.8"/><path d="M11.4 5C12.8 6.6 12.8 9.6 11.4 11.2" fill="none" stroke="#1f5c9c" stroke-width="1"/><path d="M13 4.6L14.8 2.6M13 11.6L14.8 13.8" stroke="#1f5c9c" stroke-width="1.1"/><rect x="14" y="7.4" width="1.8" height="1.6" fill="#1f5c9c"/></svg>
<svg class="a" style="left:37px;top:909.5px" width="17" height="16" viewBox="0 0 17 16"><path d="M0.8 5.2H3.8L7.6 0.9H10.4V15.1H7.6L3.8 11.2H0.8Z" fill="url(#spA)" stroke="#1f5c9c" stroke-width="1" stroke-linejoin="round"/><path d="M8.8 1V15" stroke="#1f5c9c" stroke-width="0.8"/><path d="M11.4 5C12.8 6.6 12.8 9.6 11.4 11.2" fill="none" stroke="#1f5c9c" stroke-width="1"/><path d="M13 4.6L14.8 2.6M13 11.6L14.8 13.8" stroke="#1f5c9c" stroke-width="1.1"/><rect x="14" y="7.4" width="1.8" height="1.6" fill="#1f5c9c"/></svg>
<div class="sep" style="left:56px"></div>
<div class="sep" style="left:206px"></div>
<div class="sep" style="left:296px"></div>
<div class="sep" style="left:430px"></div>
<div class="sep" style="left:490px"></div>
<div class="sep" style="left:740px"></div>
<div class="t" style="left:71px;top:909px"><span class="n">2016-10-27 19:46:07</span></div>
<div class="t" style="left:218px;top:909px">当前操作员<span class="co" style="width:5px">:</span></div>
<div class="t" style="left:348px;top:909px">张生</div>
<div class="t" style="left:439px;top:909px">授权予</div>
<div class="t" style="left:494px;top:909px">中异软件（测试版，数据不稳定）【正式版】</div>
<svg class="a" style="left:746px;top:909.5px" width="17" height="16" viewBox="0 0 17 16"><path d="M0.8 5.2H3.8L7.6 0.9H10.4V15.1H7.6L3.8 11.2H0.8Z" fill="url(#spA)" stroke="#1f5c9c" stroke-width="1" stroke-linejoin="round"/><path d="M8.8 1V15" stroke="#1f5c9c" stroke-width="0.8"/><path d="M11.4 5C12.8 6.6 12.8 9.6 11.4 11.2" fill="none" stroke="#1f5c9c" stroke-width="1"/><path d="M13 4.6L14.8 2.6M13 11.6L14.8 13.8" stroke="#1f5c9c" stroke-width="1.1"/><rect x="14" y="7.4" width="1.8" height="1.6" fill="#1f5c9c"/></svg>
<div class="t" style="left:772px;top:909px;color:#3493e6">中异软件<span class="n"> - </span>行业管理软件开发商<span class="n" style="letter-spacing:0.5px">&nbsp;&nbsp; </span>售后电话<span class="n">/QQ:</span><span style="display:inline-block;width:5px"></span><span class="n"> 189-2235-3305</span></div>
<div class="a" style="left:1529px;top:915px;width:2px;height:2px;background:#fff"></div><div class="a" style="left:1528px;top:914px;width:2px;height:2px;background:#b4b4b4"></div><div class="a" style="left:1525px;top:919px;width:2px;height:2px;background:#fff"></div><div class="a" style="left:1524px;top:918px;width:2px;height:2px;background:#b4b4b4"></div><div class="a" style="left:1529px;top:919px;width:2px;height:2px;background:#fff"></div><div class="a" style="left:1528px;top:918px;width:2px;height:2px;background:#b4b4b4"></div><div class="a" style="left:1521px;top:923px;width:2px;height:2px;background:#fff"></div><div class="a" style="left:1520px;top:922px;width:2px;height:2px;background:#b4b4b4"></div><div class="a" style="left:1525px;top:923px;width:2px;height:2px;background:#fff"></div><div class="a" style="left:1524px;top:922px;width:2px;height:2px;background:#b4b4b4"></div><div class="a" style="left:1529px;top:923px;width:2px;height:2px;background:#fff"></div><div class="a" style="left:1528px;top:922px;width:2px;height:2px;background:#b4b4b4"></div>
<div class="a" style="left:0;top:935px;width:1542px;height:1px;background:#4d89c2"></div>
</div>
</body></html>
